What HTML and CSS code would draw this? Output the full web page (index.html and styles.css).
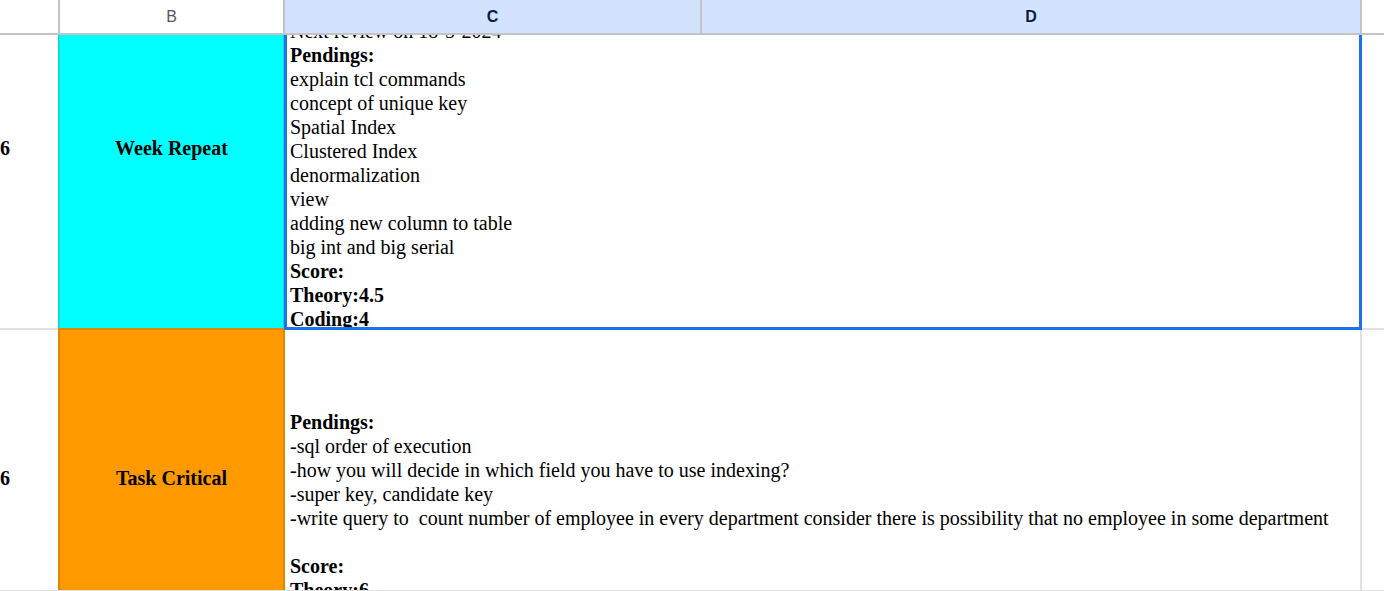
FILE: index.html
```html
<!DOCTYPE html>
<html lang="en">
<head>
<meta charset="utf-8">
<title>Review sheet</title>
<link rel="stylesheet" href="styles.css">
</head>
<body>
<main class="sheet">
  <table class="grid">
    <colgroup>
      <col class="col-a"><col class="col-b"><col class="col-c"><col class="col-d"><col class="col-e">
    </colgroup>
    <thead>
      <tr>
        <td></td>
        <th scope="col" class="head-b">B</th>
        <th scope="col" class="active">C</th>
        <th scope="col" class="active">D</th>
        <td></td>
      </tr>
    </thead>
    <tbody>
      <tr class="row-week">
        <td class="number">6</td>
        <td class="status week">Week Repeat</td>
        <td class="notes selected" colspan="2">
          <div class="clip">
            <div class="text">Next review on 18-5-2024
<b>Pendings:</b>
explain tcl commands
concept of unique key
Spatial Index
Clustered Index
denormalization
view
adding new column to table
big int and big serial
<b>Score:</b>
<b>Theory:4.5</b>
<b>Coding:4</b></div>
          </div>
        </td>
        <td></td>
      </tr>
      <tr class="row-task">
        <td class="number">6</td>
        <td class="status task">Task Critical</td>
        <td class="notes" colspan="2">
          <div class="text"><b>Pendings:</b>
-sql order of execution
-how you will decide in which field you have to use indexing?
-super key, candidate key
-write query to  count number of employee in every department consider there is possibility that no employee in some department

<b>Score:</b>
<b>Theory:6</b>
<b>Coding:6</b></div>
        </td>
        <td></td>
      </tr>
    </tbody>
  </table>
</main>
</body>
</html>
```
FILE: styles.css
```css
* { box-sizing: border-box; }

body {
  margin: 0;
  background: #fff;
  color: #000;
  font: 20px/24px "Liberation Serif", "Times New Roman", serif;
}

.sheet {
  height: 100vh;
  overflow: hidden;
  border-bottom: 1px solid #e1e1e1;
}

.grid {
  width: 100%;
  table-layout: fixed;
  border-collapse: separate;
  border-spacing: 0;
}

.col-a { width: 58px; }
.col-b { width: 227px; }
.col-c { width: 417px; }
.col-e { width: 22px; }

td, th { padding: 0; }

thead td, thead th {
  height: 35px;
  border-bottom: 2px solid #c4c4c4;
}

thead th {
  border-right: 2px solid #c4c4c4;
  font: 16px/24px "Liberation Sans", Arial, sans-serif;
  color: #575757;
}

thead .head-b { border-left: 2px solid #c4c4c4; }

thead .active {
  background: #d3e3fd;
  color: #041e49;
  font-weight: bold;
}

.row-week td { height: 293px; }
.row-task td { height: 300px; border-top: 2px solid #e1e1e1; }

.number, .status {
  font-weight: bold;
  vertical-align: middle;
  padding-bottom: 2px;
}

.row-week .number, .row-week .status { padding-bottom: 67px; }

.status {
  text-align: center;
  border: 2px solid;
  border-bottom: 0;
}

.week {
  background: #0ff;
  border-color: #00e0e0;
  border-top: 0;
}

.row-task .task {
  background: #f90;
  border-color: #e08700;
}

.notes {
  padding-left: 5px;
  padding-bottom: 2px;
  vertical-align: bottom;
  border-right: 2px solid #e1e1e1;
}

.text { white-space: pre-wrap; }

.selected {
  position: relative;
  padding-bottom: 0;
}

/* Selection outline, drawn over the neighbouring grid lines */
.selected::after {
  content: "";
  position: absolute;
  inset: 0 -2px -2px -1px;
  border: 3px solid #1a73e8;
  border-top: 0;
}

.clip {
  height: 293px;
  overflow: hidden;
}

/* Scrolled part of the first line stays under the header */
.clip .text { margin-top: -16px; }
```
